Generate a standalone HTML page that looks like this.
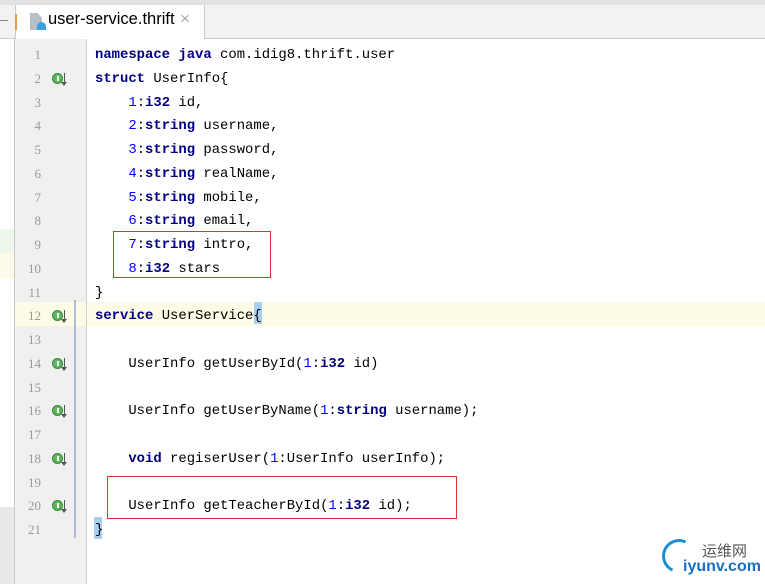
<!DOCTYPE html>
<html><head><meta charset="utf-8"><style>
body{margin:0;width:765px;height:584px;position:relative;overflow:hidden;background:#fff;font-family:"Liberation Mono",monospace;}
.a{position:absolute}
.code{position:absolute;left:95px;font-size:13.9px;white-space:pre;color:#000;line-height:23.75px}
.k{color:#000080;font-weight:bold}.n{color:#0000ff}
.ln{position:absolute;left:15px;width:26px;text-align:right;font-size:13px;color:#999;line-height:24px;font-family:"Liberation Serif",serif}
.ic{position:absolute;left:52px;width:11px;height:11px;border-radius:50%;background:#5cb85c;border:1px solid #3a8a3a;box-sizing:border-box}
.ic:after{content:"";position:absolute;left:4px;top:2px;width:2px;height:5px;background:#fff}
.ar{position:absolute;left:64px;width:1px;height:11px;background:#555}
.ar:after{content:"";position:absolute;left:-3px;top:9px;border:3.5px solid transparent;border-top:4px solid #555}
</style></head><body>
<div class="a" style="left:0;top:0;width:765px;height:5px;background:#e2e2e2"></div>
<div class="a" style="left:0;top:5px;width:765px;height:33px;background:#f2f2f2;border-bottom:1px solid #c9c9c9"></div>
<div class="a" style="left:0;top:20px;width:8px;height:1px;background:#888"></div>
<div class="a" style="left:15px;top:5px;width:188px;height:34px;background:#fff;border-left:1px solid #c9c9c9;border-right:1px solid #c9c9c9"></div>
<div class="a" style="left:15px;top:14px;width:2px;height:16px;background:#e0a040"></div>
<div class="a" style="left:30px;top:13px;width:12px;height:17px;background:#b8bec6;clip-path:polygon(0 0,65% 0,100% 30%,100% 100%,0 100%)"></div>
<div class="a" style="left:37px;top:22px;width:9px;height:8px;background:#3aa0e0;border-radius:5px 5px 0 0"></div>
<div class="a" style="left:48px;top:10px;font-family:'Liberation Sans',sans-serif;font-size:16.5px;color:#000">user-service.thrift</div>
<div class="a" style="left:180px;top:9px;font-family:'Liberation Sans',sans-serif;font-size:17px;color:#aaa">×</div>
<div class="a" style="left:0;top:39px;width:14px;height:545px;background:#fff;border-right:1px solid #c9c9c9"></div>
<div class="a" style="left:0;top:229px;width:14px;height:24px;background:#eef7ec"></div>
<div class="a" style="left:0;top:253px;width:14px;height:25px;background:#fdfbe8"></div>
<div class="a" style="left:0;top:507px;width:14px;height:77px;background:#e8e8e8"></div>
<div class="a" style="left:15px;top:39px;width:71px;height:545px;background:#f0f0f0;border-right:1px solid #d0d0d0"></div>
<div class="a" style="left:87px;top:302px;width:678px;height:24px;background:#fdfbe6"></div>
<div class="a" style="left:15px;top:302px;width:71px;height:24px;background:#fdfbe6"></div>
<div class="a" style="left:74px;top:300px;width:2px;height:238px;background:#a9bed8"></div>
<div class="a" style="left:254px;top:302px;width:8px;height:22px;background:#a8cff2"></div>
<div class="a" style="left:94px;top:517px;width:8px;height:22px;background:#a8cff2"></div>
<div class="a" style="left:113px;top:231px;width:158px;height:47px;border:1px solid #e03030;box-sizing:border-box"></div>
<div class="a" style="left:107px;top:476px;width:350px;height:43px;border:1px solid #e03030;box-sizing:border-box"></div>
<div id="g"></div>
<div class="code" style="top:44px"><span class="k">namespace java</span> com.idig8.thrift.user
<span class="k">struct</span> UserInfo{
    <span class="n">1</span>:<span class="k">i32</span> id,
    <span class="n">2</span>:<span class="k">string</span> username,
    <span class="n">3</span>:<span class="k">string</span> password,
    <span class="n">4</span>:<span class="k">string</span> realName,
    <span class="n">5</span>:<span class="k">string</span> mobile,
    <span class="n">6</span>:<span class="k">string</span> email,
    <span class="n">7</span>:<span class="k">string</span> intro,
    <span class="n">8</span>:<span class="k">i32</span> stars
}
<span class="k">service</span> UserService{

    UserInfo getUserById(<span class="n">1</span>:<span class="k">i32</span> id)

    UserInfo getUserByName(<span class="n">1</span>:<span class="k">string</span> username);

    <span class="k">void</span> regiserUser(<span class="n">1</span>:UserInfo userInfo);

    UserInfo getTeacherById(<span class="n">1</span>:<span class="k">i32</span> id);
}</div>
<div class="a" style="left:662px;top:539px;width:34px;height:34px;border-radius:50%;border:3px solid #1a8fd8;border-right-color:transparent;border-bottom-color:transparent;transform:rotate(-20deg);box-sizing:border-box"></div>
<div class="a" style="left:702px;top:540px;font-family:'Liberation Sans','Noto Sans CJK SC',sans-serif;font-size:15px;color:#555">运维网</div>
<div class="a" style="left:683px;top:558px;font-family:'Liberation Sans',sans-serif;font-size:16px;font-weight:bold;color:#1a6fc0">iyunv.com</div>
<script>
var g=document.getElementById('g'),h='';
var icons=[2,12,14,16,18,20];
for(var i=1;i<=21;i++){var y=43+(i-1)*23.75;
h+='<div class="ln" style="top:'+y+'px">'+i+'</div>';
if(icons.indexOf(i)>=0){h+='<div class="ic" style="top:'+(y+6)+'px"></div><div class="ar" style="top:'+(y+6)+'px"></div>';}}
g.innerHTML=h;
</script>
</body></html>
